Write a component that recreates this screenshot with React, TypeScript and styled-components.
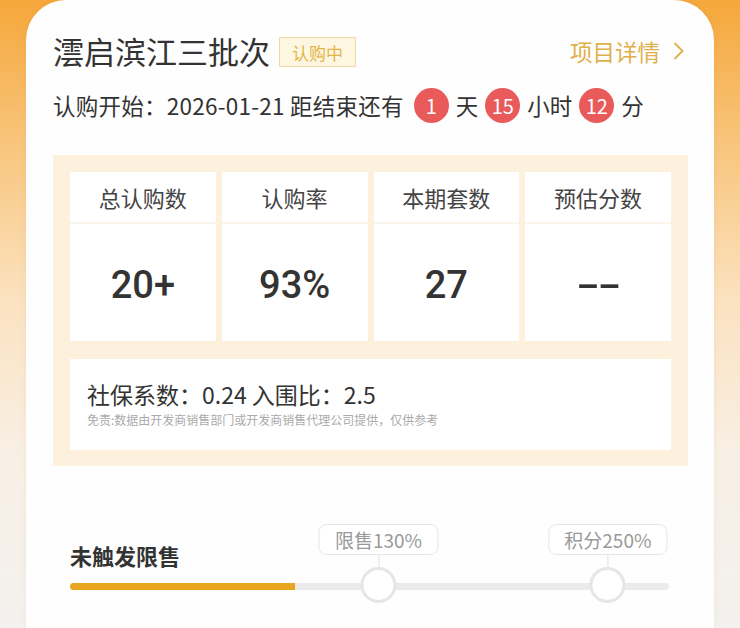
import { createGlobalStyle, styled } from "styled-components";

const GlobalStyle = createGlobalStyle`
	* { box-sizing: border-box; }
	html, body {
		margin: 0;
		padding: 0;
	}
	body {
		width: 740px;
		min-height: 628px;
		overflow: hidden;
		font-family: "Noto Sans CJK SC", "Noto Sans", sans-serif;
		background: linear-gradient(180deg, #f5a73a 0%, #f8c47a 22%, #fbe2c0 48%, #f8efe4 72%, #f3f1ee 100%);
	}
`;

const stats = [
	{ label: "总认购数", value: "20+" },
	{ label: "认购率", value: "93%" },
	{ label: "本期套数", value: "27" },
	{ label: "预估分数", value: "--" },
];

const markers = [
	{ label: "限售130%", at: 51.5 },
	{ label: "积分250%", at: 89.8 },
];

export default function App() {
	return (
		<>
			<GlobalStyle />
			<Page>
				<Card>
					<Header>
						<TitleGroup>
							<Title>澐启滨江三批次</Title>
							<Badge>认购中</Badge>
						</TitleGroup>
						<DetailLink>
							项目详情
							<svg width="14" height="22" viewBox="0 0 14 22" fill="none">
								<path d="M3 3.5l7.5 7.5-7.5 7.5" stroke="currentColor" strokeWidth="1.8" strokeLinecap="round" strokeLinejoin="round" />
							</svg>
						</DetailLink>
					</Header>

					<Countdown>
						<Lead>认购开始：2026-01-21 距结束还有</Lead>
						<Dot>1</Dot>
						<span>天</span>
						<Dot>15</Dot>
						<span>小时</span>
						<Dot>12</Dot>
						<span>分</span>
					</Countdown>

					<StatsPanel>
						<StatsGrid>
							{stats.map((s) => (
								<StatCell key={s.label}>
									<StatLabel>{s.label}</StatLabel>
									<StatValue>
										{s.value === "--" ? <Dash>{s.value}</Dash> : s.value}
									</StatValue>
								</StatCell>
							))}
						</StatsGrid>
						<InfoBox>
							<InfoLine>社保系数：0.24 入围比：2.5</InfoLine>
							<Disclaimer>免责:数据由开发商销售部门或开发商销售代理公司提供，仅供参考</Disclaimer>
						</InfoBox>
					</StatsPanel>

					<Progress>
						<ProgressTitle>未触发限售</ProgressTitle>
						<Track>
							<Fill style={{ width: "37.5%" }} />
							{markers.map((m) => (
								<Marker key={m.label} style={{ left: `${m.at}%` }}>
									<MarkerLabel>{m.label}</MarkerLabel>
									<MarkerStem />
									<MarkerKnob />
								</Marker>
							))}
						</Track>
					</Progress>
				</Card>
			</Page>
		</>
	);
}

const Page = styled.div`
	padding: 0 26px 0 26px;
`;

const Card = styled.div`
	width: 688px;
	min-height: 628px;
	background: #fefefe;
	border-radius: 40px 40px 0 0;
	padding: 31px 26px 0 27px;
	box-shadow: 0 0 6px rgba(160, 120, 80, 0.08);
`;

const Header = styled.div`
	display: flex;
	align-items: center;
	justify-content: space-between;
	height: 40px;
`;

const TitleGroup = styled.div`
	display: flex;
	align-items: center;
	gap: 9px;
`;

const Title = styled.h1`
	margin: 0;
	font-size: 31px;
	font-weight: 400;
	line-height: 40px;
	color: #333;
`;

const Badge = styled.span`
	display: inline-flex;
	align-items: center;
	height: 30px;
	padding: 0 12px;
	font-size: 17px;
	color: #e3b548;
	background: #fdf7e2;
	border: 1px solid #efd9a0;
	margin-top: 2px;
`;

const DetailLink = styled.a`
	display: flex;
	align-items: center;
	gap: 12px;
	margin-right: 2px;
	font-size: 22.5px;
	color: #e0b04a;
	cursor: pointer;
`;

const Countdown = styled.div`
	display: flex;
	align-items: center;
	gap: 7px;
	height: 36px;
	margin-top: 16px;
	font-size: 22.5px;
	color: #333;
`;

const Lead = styled.span`
	letter-spacing: 0.25px;
	margin-right: 3px;
`;

const Dot = styled.span`
	display: inline-flex;
	align-items: center;
	justify-content: center;
	min-width: 35px;
	height: 35px;
	padding: 0 4px;
	border-radius: 18px;
	background: #e95a5b;
	color: #fff;
	font-size: 20px;
`;

const StatsPanel = styled.div`
	margin-top: 32px;
	background: #fdf1de;
	padding: 17px 17px 16px 17px;
	display: flex;
	flex-direction: column;
	gap: 18px;
`;

const StatsGrid = styled.div`
	display: grid;
	grid-template-columns: repeat(4, 1fr);
	gap: 6px;
`;

const StatCell = styled.div`
	display: flex;
	flex-direction: column;
	background: #fff;
`;

const StatLabel = styled.div`
	height: 52px;
	display: flex;
	align-items: center;
	justify-content: center;
	font-size: 22px;
	color: #444;
	border-bottom: 2px solid #fbf5ec;
`;

const StatValue = styled.div`
	height: 117px;
	display: flex;
	align-items: center;
	justify-content: center;
	padding-top: 4px;
	font-family: "Roboto", "Noto Sans CJK SC", sans-serif;
	font-size: 38px;
	font-weight: 500;
	color: #333;
`;

const Dash = styled.span`
	display: inline-block;
	letter-spacing: -1px;
	transform: scaleX(1.8);
`;

const InfoBox = styled.div`
	background: #fff;
	height: 91px;
	padding: 21px 17px 0 17px;
`;

const InfoLine = styled.div`
	font-size: 23px;
	line-height: 28px;
	color: #333;
`;

const Disclaimer = styled.div`
	margin-top: 4px;
	font-size: 12px;
	line-height: 16px;
	color: #aaa;
`;

const Progress = styled.div`
	margin-top: 74px;
	padding: 0 19px 0 17px;
`;

const ProgressTitle = styled.div`
	font-size: 22px;
	font-weight: 700;
	line-height: 30px;
	color: #333;
`;

const Track = styled.div`
	position: relative;
	margin-top: 13px;
	height: 7px;
	border-radius: 4px;
	background: #ebebeb;
`;

const Fill = styled.div`
	height: 100%;
	border-radius: 4px 0 0 4px;
	background: #eaa520;
`;

const Marker = styled.div`
	position: absolute;
	top: -59px;
	transform: translateX(-50%);
	display: flex;
	flex-direction: column;
	align-items: center;
`;

const MarkerLabel = styled.div`
	height: 31px;
	padding: 0 15px;
	display: flex;
	align-items: center;
	border: 1.5px solid #e6e6e6;
	border-radius: 8px;
	background: #fff;
	font-size: 19px;
	color: #999;
	white-space: nowrap;
`;

const MarkerStem = styled.div`
	width: 1px;
	height: 12px;
	background: #e2e2e2;
`;

const MarkerKnob = styled.div`
	width: 36px;
	height: 36px;
	border-radius: 50%;
	background: #fff;
	border: 3px solid #e6e6e6;
`;
